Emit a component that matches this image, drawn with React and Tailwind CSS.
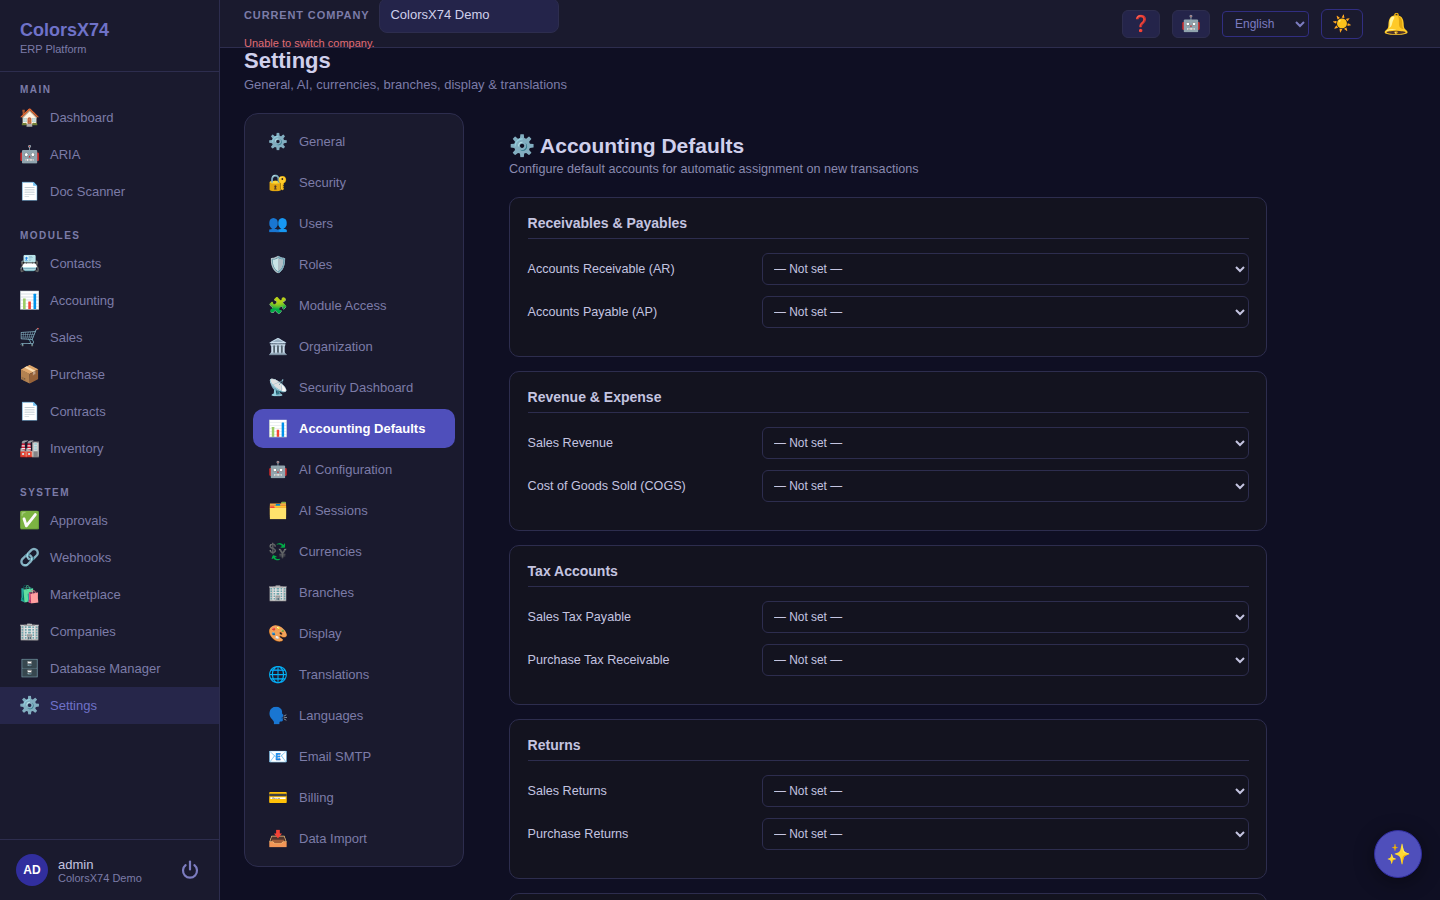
import React from 'react';

const sidebarSections = [
  { title: 'MAIN', items: [['🏠', 'Dashboard'], ['🤖', 'ARIA'], ['📄', 'Doc Scanner']] },
  {
    title: 'MODULES',
    items: [['📇', 'Contacts'], ['📊', 'Accounting'], ['🛒', 'Sales'], ['📦', 'Purchase'], ['📄', 'Contracts'], ['🏭', 'Inventory']],
  },
  {
    title: 'SYSTEM',
    items: [['✅', 'Approvals'], ['🔗', 'Webhooks'], ['🛍️', 'Marketplace'], ['🏢', 'Companies'], ['🗄️', 'Database Manager'], ['⚙️', 'Settings']],
  },
];

const settingsNav = [
  ['⚙️', 'General'], ['🔐', 'Security'], ['👥', 'Users'], ['🛡️', 'Roles'], ['🧩', 'Module Access'], ['🏛️', 'Organization'],
  ['📡', 'Security Dashboard'], ['📊', 'Accounting Defaults'], ['🤖', 'AI Configuration'], ['🗂️', 'AI Sessions'], ['💱', 'Currencies'],
  ['🏢', 'Branches'], ['🎨', 'Display'], ['🌐', 'Translations'], ['🗣️', 'Languages'], ['📧', 'Email SMTP'], ['💳', 'Billing'], ['📥', 'Data Import'],
];

const accountGroups = [
  { title: 'Receivables & Payables', rows: ['Accounts Receivable (AR)', 'Accounts Payable (AP)'] },
  { title: 'Revenue & Expense', rows: ['Sales Revenue', 'Cost of Goods Sold (COGS)'] },
  { title: 'Tax Accounts', rows: ['Sales Tax Payable', 'Purchase Tax Receivable'] },
  { title: 'Returns', rows: ['Sales Returns', 'Purchase Returns'] },
];

function Sidebar() {
  return (
    <aside className="w-[220px] shrink-0 h-full flex flex-col bg-[#1a1a2e] border-r border-[#2d2d4e]">
      <div className="h-[72px] shrink-0 px-5 pt-[19px] border-b border-[#2d2d4e]">
        <div className="text-[18px] leading-[22px] font-bold text-[#6f72c8]">ColorsX74</div>
        <div className="text-[11px] leading-[14px] mt-[1px] text-[#7c7ca8]">ERP Platform</div>
      </div>

      <nav className="flex-1 pt-3">
        {sidebarSections.map(section => (
          <div key={section.title} className="mb-5">
            <div className="px-5 h-[15px] leading-[12px] text-[10px] font-bold tracking-[1.5px] text-[#7c7ca8]">{section.title}</div>
            {section.items.map(([icon, label]) => (
              <div
                key={label}
                className={`h-[37px] px-5 flex items-center gap-[11px] text-[13px] ${label === 'Settings' ? 'bg-[#26264a] text-[#6f72c8]' : 'text-[#7c7ca8]'}`}
              >
                <span className="text-[17px] w-[19px] flex justify-center">{icon}</span>
                <span>{label}</span>
              </div>
            ))}
          </div>
        ))}
      </nav>

      <div className="h-[61px] shrink-0 border-t border-[#2d2d4e] pl-4 pr-5 flex items-center gap-[10px]">
        <div className="w-8 h-8 rounded-full bg-[#312e9e] text-white text-[12px] font-bold flex items-center justify-center">AD</div>
        <div className="flex-1 pt-[2px]">
          <div className="text-[13px] leading-[14px] text-[#c4c4e0]">admin</div>
          <div className="text-[11px] leading-[13px] text-[#7c7ca8]">ColorsX74 Demo</div>
        </div>
        <svg width="18" height="20" viewBox="0 0 18 20" fill="none" stroke="#7c7cc0" strokeWidth="2.2" strokeLinecap="round">
          <path d="M9 1.5v8" />
          <path d="M4.6 5.2a7 7 0 1 0 8.8 0" />
        </svg>
      </div>
    </aside>
  );
}

function Topbar() {
  return (
    <header className="h-12 shrink-0 relative z-10 flex items-center justify-between pl-6 pr-6 bg-[#1a1a2e] border-b border-[#2d2d4e]">
      <div className="flex flex-col">
        <div className="flex items-center gap-[10px]">
          <span className="text-[11px] font-bold tracking-[0.88px] text-[#7c7ca8]">CURRENT COMPANY</span>
          <div className="w-[180px] h-[35px] px-[10px] flex items-center rounded-lg bg-[#24244a] border border-[#2d2d4e] text-[13px] text-[#d0d0ec]">
            ColorsX74 Demo
          </div>
        </div>
        <div className="text-[11px] leading-[13px] mt-1 text-[#e06c75]">Unable to switch company.</div>
      </div>

      <div className="flex items-center">
        <button className="w-[38px] h-7 rounded-md bg-[#24244a] border border-[#2d2d4e] text-[16px] flex items-center justify-center">❓</button>
        <button className="w-[38px] h-7 ml-3 rounded-md bg-[#24244a] border border-[#2d2d4e] text-[16px] flex items-center justify-center">🤖</button>
        <select className="w-[87px] h-[26px] ml-3 pl-2 rounded bg-[#1a1a2e] border border-[#312e81] text-[12px] text-[#7c7cc0]">
          <option>English</option>
        </select>
        <button className="w-[42px] h-[30px] ml-3 rounded-md border border-[#312e81] text-[16px] flex items-center justify-center">☀️</button>
        <span className="w-[25px] ml-5 mr-2 text-[21px] leading-none flex justify-center">🔔</span>
      </div>
    </header>
  );
}

function SettingsNav() {
  return (
    <div className="w-[220px] shrink-0 self-start p-2 rounded-[14px] bg-[#1a1a2e] border border-[#2d2d4e] flex flex-col gap-[2px]">
      {settingsNav.map(([icon, label]) => {
        const active = label === 'Accounting Defaults';
        return (
          <div
            key={label}
            className={`h-[39px] px-[15px] rounded-[10px] flex items-center gap-[11px] text-[13px] ${active ? 'bg-[#4f4fbb] text-white font-bold' : 'text-[#7c7ca8]'}`}
          >
            <span className="text-[16px] w-5 flex justify-center font-normal">{icon}</span>
            <span>{label}</span>
          </div>
        );
      })}
    </div>
  );
}

function AccountCard({ group }) {
  return (
    <section className="h-40 shrink-0 pl-[17.6px] pr-[17px] rounded-[10px] bg-[#13131f] border border-[#2d2d4e]">
      <h3 className="h-[41px] pt-[15px] leading-[20px] text-[14px] font-bold text-[#c4c4e0] border-b border-[#2d2d4e]">{group.title}</h3>
      <div className="mt-[14px] flex flex-col gap-[11px]">
        {group.rows.map(label => (
          <div key={label} className="flex items-center">
            <label className="w-[234.4px] shrink-0 text-[12.6px] text-[#c4c4e0]">{label}</label>
            <select className="flex-1 h-8 pl-[7px] rounded-md bg-[#13131f] border border-[#2d2d4e] text-[11.9px] text-[#c4c4e0]">
              <option>— Not set —</option>
            </select>
          </div>
        ))}
      </div>
    </section>
  );
}

export default function App() {
  return (
    <div className="h-screen w-full flex overflow-hidden bg-[#0f0f23] font-['Liberation_Sans',Arial,sans-serif]">
      <Sidebar />
      <div className="flex-1 min-w-0 flex flex-col">
        <Topbar />
        <main className="flex-1 min-h-0 overflow-hidden px-6">
          <h1 className="text-[22px] leading-[26px] font-bold text-[#d0d0ec]">Settings</h1>
          <p className="mt-[3px] text-[13px] leading-[16px] text-[#7c7ca8]">General, AI, currencies, branches, display &amp; translations</p>

          <div className="mt-5 flex">
            <SettingsNav />
            <div className="w-[758px] ml-[45px] pt-[19px] flex flex-col">
              <h2 className="text-[21px] leading-[28px] font-bold text-[#d0d0ec]">⚙️ Accounting Defaults</h2>
              <p className="mt-[1px] text-[12.6px] leading-[16px] text-[#8a8ab0]">Configure default accounts for automatic assignment on new transactions</p>
              <div className="mt-5 flex flex-col gap-[14px]">
                {accountGroups.map(group => (
                  <AccountCard key={group.title} group={group} />
                ))}
                {/* next card only peeks in at the bottom of the page */}
                <section className="h-40 shrink-0 rounded-[10px] bg-[#13131f] border border-[#2d2d4e]" />
              </div>
            </div>
          </div>
        </main>
      </div>

      {/* Assistant button */}
      <button className="fixed right-[18px] bottom-[22px] z-20 w-12 h-12 rounded-full bg-[#4f4fbb] border border-[#312e9e] text-[20px] flex items-center justify-center shadow-[0_4px_20px_rgba(0,0,0,0.4)]">
        ✨
      </button>
    </div>
  );
}
